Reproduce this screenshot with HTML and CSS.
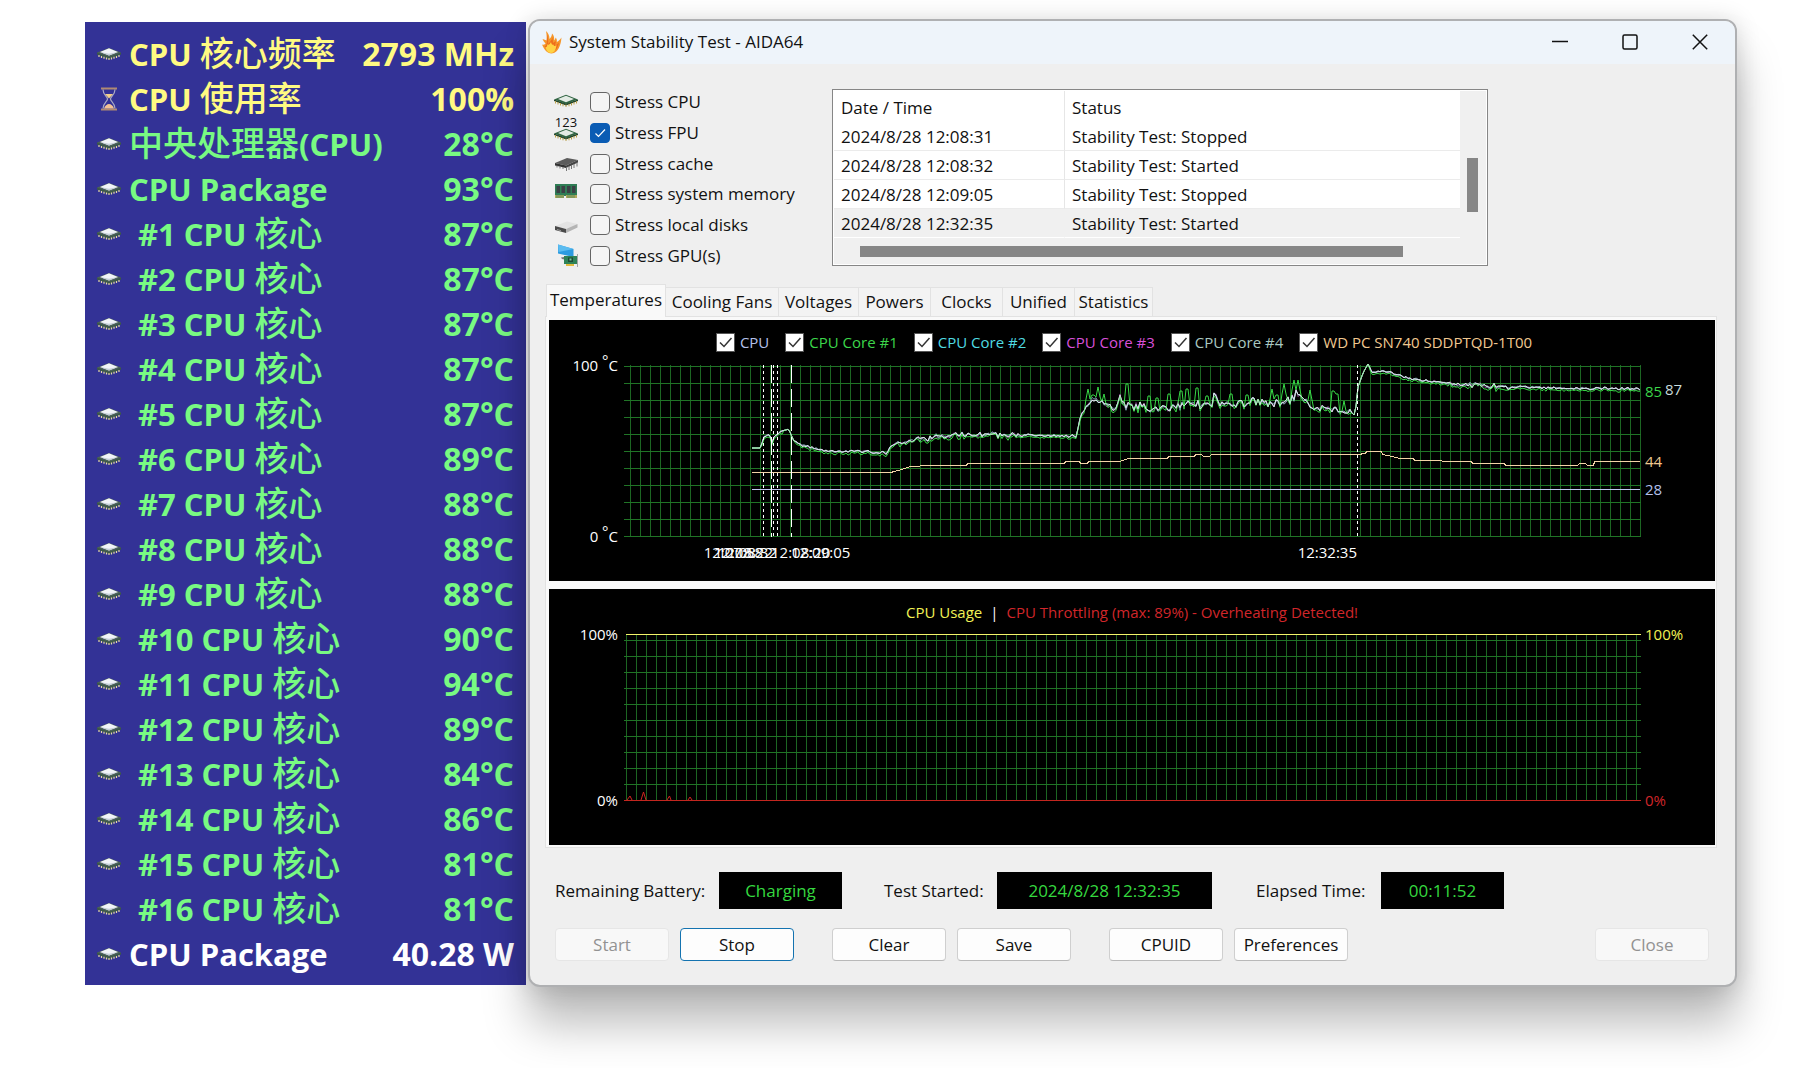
FILE: index.html
```html
<!DOCTYPE html>
<html lang="en">
<head>
<meta charset="utf-8">
<meta name="viewport" content="width=device-width, initial-scale=1">
<title>System Stability Test - AIDA64</title>
<link rel="stylesheet" href="styles.css">
</head>
<body>
<svg class="defs" aria-hidden="true">
  <symbol id="chip" viewBox="0 0 24 13">
    <path d="M0 5.500V7.500L12 12L24 7.500V5.500L12 9.500Z" fill="#3c5a46"/>
    <path d="M2 8v2M4.500 9v2M7 9.800v2M9.500 10.500v2M12 11v2M14.500 10.500v2M17 9.800v2M19.500 9v2M22 8v2" stroke="#e6d9a0" stroke-width="1.200"/>
    <path d="M0 5.500L12 1L24 5.500L12 10Z" fill="#4d6358"/>
    <path d="M3 4.900L12 1.300L21 4.900L12 8.500Z" fill="#f1f4f8"/>
    <path d="M3 4.900L12 8.500L21 4.900L12 6.800Z" fill="#c3ccd6"/>
  </symbol>
  <symbol id="chip-green" viewBox="0 0 24 13">
    <path d="M0 5.500V7L12 11.500L24 7V5.500L12 9.500Z" fill="#23452c"/>
    <path d="M1.500 7v2.500M4 8v2.500M6.500 9v2.500M9 9.800v2.500M12 10.500v2.500M15 9.800v2.500M17.500 9v2.500M20 8v2.500M22.500 7v2.500" stroke="#b9a04a" stroke-width="1"/>
    <path d="M0 5.500L12 .8L24 5.500L12 10Z" fill="#2f6340"/>
    <path d="M4 5L12 1.800L20 5L12 8.300Z" fill="#e3ebe4"/>
  </symbol>
  <symbol id="hourglass" viewBox="0 0 24 24">
    <path d="M4 1.500h16M4 22.500h16" stroke="#b08a72" stroke-width="2"/>
    <path d="M6 2.500C6 8 10.500 9.500 10.500 12S6 16 6 21.500M18 2.500C18 8 13.500 9.500 13.500 12S18 16 18 21.500" fill="none" stroke="#a9a9c4" stroke-width="1.200"/>
    <path d="M8 7h8L12 11.500Z" fill="#f2cf8c"/>
    <path d="M7 21.500C8 18.500 10 17 12 17S16 18.500 17 21.500Z" fill="#f3c294"/>
  </symbol>
</svg>

<div class="desktop">
  <table class="sensors" aria-label="Sensors">
    <colgroup><col class="col-pic"><col><col class="col-value"></colgroup>
    <tbody>
      <tr class="yellow"><td class="pic"><svg class="chip"><use href="#chip"/></svg></td><th scope="row">CPU <span class="cjk">核心频率</span></th><td>2793 MHz</td></tr>
      <tr class="yellow"><td class="pic"><svg class="hourglass"><use href="#hourglass"/></svg></td><th scope="row">CPU <span class="cjk">使用率</span></th><td>100%</td></tr>
      <tr><td class="pic"><svg class="chip"><use href="#chip"/></svg></td><th scope="row"><span class="cjk">中央处理器</span>(CPU)</th><td>28°C</td></tr>
      <tr><td class="pic"><svg class="chip"><use href="#chip"/></svg></td><th scope="row">CPU Package</th><td>93°C</td></tr>
      <tr class="core"><td class="pic"><svg class="chip"><use href="#chip"/></svg></td><th scope="row">#1 CPU <span class="cjk">核心</span></th><td>87°C</td></tr>
      <tr class="core"><td class="pic"><svg class="chip"><use href="#chip"/></svg></td><th scope="row">#2 CPU <span class="cjk">核心</span></th><td>87°C</td></tr>
      <tr class="core"><td class="pic"><svg class="chip"><use href="#chip"/></svg></td><th scope="row">#3 CPU <span class="cjk">核心</span></th><td>87°C</td></tr>
      <tr class="core"><td class="pic"><svg class="chip"><use href="#chip"/></svg></td><th scope="row">#4 CPU <span class="cjk">核心</span></th><td>87°C</td></tr>
      <tr class="core"><td class="pic"><svg class="chip"><use href="#chip"/></svg></td><th scope="row">#5 CPU <span class="cjk">核心</span></th><td>87°C</td></tr>
      <tr class="core"><td class="pic"><svg class="chip"><use href="#chip"/></svg></td><th scope="row">#6 CPU <span class="cjk">核心</span></th><td>89°C</td></tr>
      <tr class="core"><td class="pic"><svg class="chip"><use href="#chip"/></svg></td><th scope="row">#7 CPU <span class="cjk">核心</span></th><td>88°C</td></tr>
      <tr class="core"><td class="pic"><svg class="chip"><use href="#chip"/></svg></td><th scope="row">#8 CPU <span class="cjk">核心</span></th><td>88°C</td></tr>
      <tr class="core"><td class="pic"><svg class="chip"><use href="#chip"/></svg></td><th scope="row">#9 CPU <span class="cjk">核心</span></th><td>88°C</td></tr>
      <tr class="core"><td class="pic"><svg class="chip"><use href="#chip"/></svg></td><th scope="row">#10 CPU <span class="cjk">核心</span></th><td>90°C</td></tr>
      <tr class="core"><td class="pic"><svg class="chip"><use href="#chip"/></svg></td><th scope="row">#11 CPU <span class="cjk">核心</span></th><td>94°C</td></tr>
      <tr class="core"><td class="pic"><svg class="chip"><use href="#chip"/></svg></td><th scope="row">#12 CPU <span class="cjk">核心</span></th><td>89°C</td></tr>
      <tr class="core"><td class="pic"><svg class="chip"><use href="#chip"/></svg></td><th scope="row">#13 CPU <span class="cjk">核心</span></th><td>84°C</td></tr>
      <tr class="core"><td class="pic"><svg class="chip"><use href="#chip"/></svg></td><th scope="row">#14 CPU <span class="cjk">核心</span></th><td>86°C</td></tr>
      <tr class="core"><td class="pic"><svg class="chip"><use href="#chip"/></svg></td><th scope="row">#15 CPU <span class="cjk">核心</span></th><td>81°C</td></tr>
      <tr class="core"><td class="pic"><svg class="chip"><use href="#chip"/></svg></td><th scope="row">#16 CPU <span class="cjk">核心</span></th><td>81°C</td></tr>
      <tr class="white"><td class="pic"><svg class="chip"><use href="#chip"/></svg></td><th scope="row">CPU Package</th><td>40.28 W</td></tr>
    </tbody>
  </table>

  <main class="window">
    <header class="titlebar">
      <svg class="flame" viewBox="0 0 20 24" aria-hidden="true">
        <path d="M4 1C6.500 3 7.500 6 7.500 9C9 7.500 10 5.500 10 3.500C12 5.500 12.500 8 12 10.500C13 9.500 13.500 8.500 13.700 7.500C15 9 15 10.500 14.800 12C16.500 11 18 10 19.500 7.500C19 11 19 13 17.500 16.500C16 20.500 13 23.500 9.500 23.500C5 23.500 2.500 20 0 14.500C2 15 3 14.500 3.500 13.500C2 12 1 10.500 .5 9C2 9.500 3.500 10 4.500 10.500C5 7.500 4.500 4 4 1Z" fill="#f5962a"/>
        <path d="M5 4C6 8 6.500 11 6 14L8 12C9 11 10 9 10.500 7L11 13L14 11L13 16L17 12.500C16 18 13.500 21.500 9.500 22C6 22 4 19 2.500 16C5 16.500 5 13 5 4Z" fill="#ee6d1c"/>
        <path d="M5 14C6.500 16 8 14 9 12C9.500 14 10 15.500 11.500 14.500C12 17 13.500 16 14.500 15C14 20 12 23 9 23C6 23 4 20 3.500 17C5 17.500 5.500 16 5 14Z" fill="#ffd243"/>
      </svg>
      <h1>System Stability Test - AIDA64</h1>
      <div class="caption">
        <button type="button" aria-label="Minimize"><svg viewBox="0 0 16 16"><path d="M0 7.500h16"/></svg></button>
        <button type="button" aria-label="Maximize"><svg viewBox="0 0 16 16"><rect x="1" y="1" width="14" height="14" rx="1.500"/></svg></button>
        <button type="button" aria-label="Close window"><svg viewBox="0 0 16 16"><path d="M.8 .8L15.200 15.200M15.200 .8L.8 15.200"/></svg></button>
      </div>
    </header>

    <section class="setup">
      <div class="stress">
        <label><svg viewBox="0 0 24 20"><use href="#chip-green" y="2" width="24" height="13"/></svg><input type="checkbox">Stress CPU</label>
        <label><svg viewBox="0 0 24 20"><text x="12" y="4" text-anchor="middle">123</text><use href="#chip-green" y="5" width="24" height="13"/></svg><input type="checkbox" checked>Stress FPU</label>
        <label><svg viewBox="0 0 24 20"><path d="M1 9L13 4L24 6L12 11.500Z" fill="#5c5c5c"/><path d="M1 9L12 11.500V14L1 11.500Z" fill="#333"/><path d="M12 11.500L24 6V8.500L12 14Z" fill="#444"/><path d="M12.500 13v4M15 12v4M17.500 11v4M20 10v4M23 8.500v4M3 11.500v2M6 12.500v2M9 13v2" stroke="#777" stroke-width="1"/></svg><input type="checkbox">Stress cache</label>
        <label><svg viewBox="0 0 24 20"><path d="M1 0H23V12H1Z" fill="#2f7d55"/><path d="M2.500 2H6V9H2.500ZM7.500 2H11V9H7.500ZM13 2H16.500V9H13ZM18 2H21.500V9H18Z" fill="#3b4045"/><path d="M1 11H10V14H1ZM12 11H23V14H12Z" fill="#b3a95c"/><path d="M3 11v3M5 11v3M7 11v3M9 11v3M14 11v3M16 11v3M18 11v3M20 11v3" stroke="#2f7d55" stroke-width=".7"/></svg><input type="checkbox">Stress system memory</label>
        <label><svg viewBox="0 0 24 20"><path d="M1 11L13 6.500L23.500 9L12 14Z" fill="#e3e3e3"/><path d="M1 11L12 14V18L1 15Z" fill="#4a4a4a"/><path d="M12 14L23.500 9V12.500L12 18Z" fill="#b4b4b4"/><path d="M3 14.500l4 1.200" stroke="#9a9a9a"/></svg><input type="checkbox">Stress local disks</label>
        <label><svg viewBox="0 0 24 20"><path d="M4 -1.500L19.500 3V11L4 7.500Z" fill="#2c9be0"/><path d="M4 -1.500L19.500 3L4.500 6Z" fill="#5bbcf0"/><path d="M7 11.500L13 10.500V14L8 13Z" fill="#777"/><path d="M10 10H23V18H10Z" fill="#2e8257"/><path d="M14 11.500H19V16H14Z" fill="#1d4a35"/><path d="M15.500 12.500h2v2h-2z" fill="#78c79d"/><path d="M12 18h8v2h-8z" fill="#e0b93c"/><path d="M23.500 8v13" stroke="#a5a5a5"/></svg><input type="checkbox">Stress GPU(s)</label>
      </div>

      <div class="log">
        <table>
          <thead><tr><th scope="col">Date / Time</th><th scope="col">Status</th></tr></thead>
          <tbody>
            <tr><td>2024/8/28 12:08:31</td><td>Stability Test: Stopped</td></tr>
            <tr><td>2024/8/28 12:08:32</td><td>Stability Test: Started</td></tr>
            <tr><td>2024/8/28 12:09:05</td><td>Stability Test: Stopped</td></tr>
            <tr class="selected"><td>2024/8/28 12:32:35</td><td>Stability Test: Started</td></tr>
          </tbody>
        </table>
        <div class="vscroll"><div class="thumb"></div></div>
        <div class="hscroll"><div class="thumb"></div></div>
      </div>
    </section>

    <div class="tabs" role="tablist">
      <button type="button" role="tab" aria-selected="true" class="wide">Temperatures</button>
      <button type="button" role="tab" class="fans">Cooling Fans</button>
      <button type="button" role="tab" class="volts">Voltages</button>
      <button type="button" role="tab">Powers</button>
      <button type="button" role="tab">Clocks</button>
      <button type="button" role="tab">Unified</button>
      <button type="button" role="tab" class="stats">Statistics</button>
    </div>

    <section class="charts">
      <figure class="chart temps">
        <div class="legend">
          <label class="c-cpu"><input type="checkbox" checked>CPU</label>
          <label class="c-core1"><input type="checkbox" checked>CPU Core #1</label>
          <label class="c-core2"><input type="checkbox" checked>CPU Core #2</label>
          <label class="c-core3"><input type="checkbox" checked>CPU Core #3</label>
          <label class="c-core4"><input type="checkbox" checked>CPU Core #4</label>
          <label class="c-disk"><input type="checkbox" checked>WD PC SN740 SDDPTQD-1T00</label>
        </div>
        <div class="graph">
          <div class="axis"><span>100 <span class="deg">°</span>C</span><span>0 <span class="deg">°</span>C</span></div>
          <div class="plot">
            <svg id="temps" viewBox="0 0 1017 172" preserveAspectRatio="none" aria-label="Temperature history"></svg>
            <div class="times" id="times"></div>
          </div>
          <div class="readouts">
            <span class="c-core1" style="top:15%">85</span>
            <span class="c-core4 second" style="top:14%">87</span>
            <span class="c-disk" style="top:56%">44</span>
            <span class="c-cpu" style="top:72%">28</span>
          </div>
        </div>
      </figure>
      <figure class="chart usage">
        <figcaption><span class="c-usage">CPU Usage</span><span class="bar">|</span><span class="c-throttle">CPU Throttling (max: 89%) - Overheating Detected!</span></figcaption>
        <div class="graph">
          <div class="axis"><span>100%</span><span>0%</span></div>
          <div class="plot">
            <svg viewBox="0 0 1017 167" preserveAspectRatio="none" aria-label="Usage history">
              <path d="M2 .5H1017" stroke="#f4f46a"/>
              <path d="M0 166.500H1017" stroke="#c3261f"/>
              <path class="soft" d="M3 166L6 162L8 166M17 166L19.500 158L22 166M43 166L45.500 162L47 166M64 166L66 163L68 166" stroke="#d0261f"/>
            </svg>
          </div>
          <div class="axis right"><span class="c-usage">100%</span><span class="c-throttle">0%</span></div>
        </div>
      </figure>
    </section>

    <section class="status">
      <span class="caption-text">Remaining Battery:</span><output class="battery">Charging</output>
      <span class="caption-text">Test Started:</span><output class="started">2024/8/28 12:32:35</output>
      <span class="caption-text">Elapsed Time:</span><output class="elapsed">00:11:52</output>
    </section>

    <footer class="actions">
      <div><button type="button" disabled>Start</button><button type="button" class="primary">Stop</button></div>
      <div><button type="button">Clear</button><button type="button">Save</button></div>
      <div><button type="button">CPUID</button><button type="button">Preferences</button></div>
      <div class="end"><button type="button" disabled>Close</button></div>
    </footer>
  </main>
</div>
<script src="charts.js"></script>
</body>
</html>
```
FILE: styles.css
```css
* { box-sizing: border-box; }
body {
  margin: 0;
  background: #fff;
  color: #111;
  font: 17px/20px "Open Sans", "Noto Sans", "Noto Sans CJK SC", sans-serif;
}
button, input { font: inherit; color: inherit; margin: 0; }
.defs { position: absolute; width: 0; height: 0; }
.desktop {
  display: flex;
  align-items: flex-start;
  gap: 2px;
  padding: 19px 57px 81px 85px;
}

/* Sensor panel */
.sensors {
  flex: none;
  width: 441px;
  margin-top: 3px;
  table-layout: fixed;
  background: #333296;
  border-collapse: separate;
  border-spacing: 0;
  border-top: 9px solid #333296;
  border-bottom: 9px solid #333296;
  color: #78fa82;
  font-weight: 700;
}
.col-pic { width: 44px; }
.col-value { width: 168px; }
.sensors tr { height: 45px; }
.sensors th, .sensors td { padding: 0; line-height: 44px; white-space: nowrap; }
.sensors th { text-align: left; font-size: 31px; }
.sensors td { text-align: right; font-size: 32px; padding-right: 12px; }
.sensors .pic { padding: 0 0 0 12px; text-align: left; line-height: 0; vertical-align: middle; }
.sensors .core th { padding-left: 9px; }
.sensors .yellow { color: #fffa82; }
.sensors .white { color: #fff; }
.cjk { font: 500 34px/34px "Noto Sans CJK SC", sans-serif; }
.chip { width: 24px; height: 13px; }
.hourglass { width: 24px; height: 24px; }

/* Window frame */
.window {
  flex: 1;
  min-width: 0;
  background: #efefef;
  border: 2px solid #afb0b2;
  border-radius: 12px;
  box-shadow: 0 38px 45px rgba(0, 0, 0, .26), 0 2px 24px rgba(0, 0, 0, .16);
}
.titlebar {
  display: flex;
  align-items: center;
  height: 43px;
  padding: 0 0 2px 12px;
  background: #eef4fa;
  border-radius: 10px 10px 0 0;
}
.flame { width: 20px; height: 24px; margin-right: 7px; }
h1 { margin: 0; font-size: 17px; font-weight: 400; }
.caption { display: flex; margin-left: auto; }
.caption button { width: 70px; height: 41px; padding: 0; border: 0; background: none; line-height: 0; }
.caption svg { width: 16px; height: 16px; fill: none; stroke: #111; stroke-width: 1.500px; }

/* Stress options and event log */
.setup { display: flex; padding: 25px 24px 0; }
.stress {
  display: flex;
  flex: 0 0 278px;
  flex-direction: column;
  justify-content: space-between;
  padding-top: 3px;
}
.stress label { display: flex; align-items: center; height: 20px; white-space: nowrap; }
.stress svg { width: 24px; height: 20px; margin-right: 12px; overflow: visible; }
.stress text { font-size: 13px; fill: #111; }
.stress input {
  appearance: none;
  width: 20px;
  height: 20px;
  margin-right: 5px;
  border: 1px solid #666;
  border-radius: 4px;
  background: #f5f5f5;
}
.stress input:checked {
  border-color: #0a5cb4;
  background: #0a5cb4 url("data:image/svg+xml,%3Csvg xmlns='http://www.w3.org/2000/svg' viewBox='0 0 18 18'%3E%3Cpath d='M4.500 9.500l3 3l6.500-7' fill='none' stroke='white' stroke-width='1.200'/%3E%3C/svg%3E");
}
.log {
  display: grid;
  flex: 0 1 656px;
  grid-template-columns: 1fr 26px;
  padding: 1px;
  border: 1px solid #868686;
  background: #fff;
}
.log table { width: 100%; border-spacing: 0; }
.log th, .log td { padding: 2px 7px 0; text-align: left; font-weight: 400; }
.log th { height: 31px; }
.log td { height: 29px; border-bottom: 1px solid #ebebeb; }
.log th:first-child, .log td:first-child { width: 231px; border-right: 1px solid #e6e6e6; }
.log .selected td { background: #f0f0f0; border-bottom-color: #fff; }
.log .selected td:first-child { border-right-color: #f0f0f0; }
.vscroll { padding: 67px 8px 0 7px; background: #f0f0f0; }
.vscroll .thumb { height: 54px; }
.hscroll { grid-column: 1 / -1; height: 26px; padding: 8px 83px 7px 26px; background: #f0f0f0; }
.hscroll .thumb { height: 11px; }
.thumb { background: #868686; }

/* Tabs */
.tabs { display: flex; align-items: flex-end; margin: 18px 0 0 16px; }
.tabs button {
  width: 72px;
  height: 29px;
  padding: 0;
  border: 1px solid #e2e2e2;
  border-width: 1px 1px 0 0;
  background: #f3f3f3;
  white-space: nowrap;
}
.tabs .wide { width: 120px; }
.tabs .fans { width: 113px; }
.tabs .volts { width: 80px; }
.tabs .stats { width: 78px; }
.tabs [aria-selected="true"] {
  position: relative;
  height: 33px;
  margin-bottom: -1px;
  padding-bottom: 2px;
  border-left-width: 1px;
  background: #f9f9f9;
}

/* Charts */
.charts {
  display: grid;
  gap: 8px;
  margin: 0 18px 0 15px;
  padding: 3px 1px 2px 3px;
  border: 1px solid #e2e2e2;
  background: #f9f9f9;
}
.chart { margin: 0; background: #000; color: #fff; font-size: 15px; }
.legend { display: flex; justify-content: center; gap: 16px; padding: 12px 16px 13px 0; }
.legend label { display: flex; align-items: center; gap: 5px; height: 20px; white-space: nowrap; }
.legend input {
  appearance: none;
  width: 19px;
  height: 19px;
  border: 1px solid #555;
  background: #fff url("data:image/svg+xml,%3Csvg xmlns='http://www.w3.org/2000/svg' viewBox='0 0 17 17'%3E%3Cpath d='M3 8.500l4 4l7.500-8.500' fill='none' stroke='%23333' stroke-width='1.500'/%3E%3C/svg%3E");
}
.graph { display: flex; }
.axis { display: flex; flex: none; flex-direction: column; justify-content: space-between; width: 75px; margin: -10px 0 -9px; padding-right: 6px; text-align: right; }
.axis.right { width: 74px; padding: 0 0 0 4px; text-align: left; }
.deg { vertical-align: 5px; line-height: 0; }
.plot {
  position: relative;
  flex: 1;
  min-width: 0;
  background-image:
    linear-gradient(#207426 1px, transparent 1px),
    linear-gradient(90deg, #1c6622 1px, transparent 1px);
}
.plot svg { display: block; width: 100%; height: 100%; overflow: visible; fill: none; stroke-width: 1px; shape-rendering: crispEdges; }
.plot .soft { shape-rendering: auto; }
.temps .graph { height: 172px; margin-bottom: 44px; }
.temps .plot { background-size: 100% 17px, 10px 100%; background-position: 0 1px, 6px 0; }
.times span { position: absolute; top: 177px; white-space: nowrap; }
.times .before { transform: translateX(-100%); }
.readouts { position: relative; flex: none; width: 74px; }
.readouts span { position: absolute; left: 4px; margin-top: -10px; }
.readouts .second { left: 24px; }
.usage figcaption { display: flex; justify-content: center; gap: 8px; padding: 13px 0 12px; }
.usage .graph { height: 167px; margin-bottom: 44px; }
.usage .plot { background-size: 100% 16px, 10px 100%; background-position: 0 6px, 2px 0; }
.c-cpu { color: #b4c0ea; }
.c-core1 { color: #3cd64a; }
.c-core2 { color: #4fdbe2; }
.c-core3 { color: #d850d8; }
.c-core4 { color: #c9dcdc; }
.c-disk { color: #f0c890; }
.c-usage { color: #f2f255; }
.c-throttle { color: #d0262a; }
.legend .c-core4 { color: #a9c8c0; }

/* Status line and buttons */
.status { display: flex; align-items: center; margin: 24px 25px 0; white-space: nowrap; }
.status output { height: 37px; background: #000; color: #35d83f; line-height: 38px; text-align: center; }
.battery { width: 123px; margin-right: 42px; }
.started { width: 215px; margin-right: 44px; }
.elapsed { width: 123px; }
.caption-text:nth-of-type(1) { width: 164px; }
.caption-text:nth-of-type(2) { width: 113px; }
.caption-text:nth-of-type(3) { width: 125px; }
.actions { display: flex; gap: 38px; padding: 19px 26px 24px 25px; }
.actions div { display: flex; gap: 11px; }
.actions .end { margin-left: auto; }
.actions button {
  width: 114px;
  height: 33px;
  padding: 0;
  border: 1px solid #cfcfcf;
  border-bottom-color: #b9b9b9;
  border-radius: 4px;
  background: #fdfdfd;
}
.actions .primary { border-color: #1473b0; }
.actions button:disabled { border-color: #e6e6e6; background: #f8f8f8; color: #929292; }
```
FILE: charts.js
```js
// Temperature history: anchor points [x, y, jitter] in a 1017 x 172 plot area.
const base = [
  [128, 83, 0], [137, 83, 0], [139, 72, 1], [146, 70, 1], [148, 78, 1], [150, 71, 1], [158, 66, 1], [165, 64, 0],
  [167, 70, 0], [170, 76, 0], [179, 81, 1], [193, 84, 1], [205, 87, 1], [231, 86, 1], [263, 88, 1], [266, 81, 1],
  [275, 78, 2], [292, 74, 2], [311, 72, 2], [331, 70, 2], [400, 70, 2], [452, 71, 1], [457, 50, 1], [463, 37, 3],
  [476, 37, 4], [485, 42, 3], [493, 43, 2], [495, 31, 1], [500, 40, 4], [520, 41, 4], [529, 48, 3], [540, 42, 4], [560, 40, 4],
  [588, 39, 4], [591, 23, 1], [595, 39, 4], [620, 38, 3], [660, 38, 4], [674, 28, 5], [688, 42, 2],
  [709, 44, 3], [727, 47, 2], [731, 51, 0], [734, 22, 0], [739, 8, 0], [744, -1, 0], [747, 7, 1], [766, 7, 1],
  [780, 12, 1], [802, 16, 1], [823, 18, 1], [852, 20, 2], [884, 22, 2], [940, 23, 1], [1016, 24, 1]
];
const spikes = [
  [464, 24], [469, 25], [474, 22], [480, 29], [503, 14], [525, 26], [533, 28], [545, 24], [557, 21], [563, 19],
  [573, 18], [583, 26], [607, 24], [623, 25], [648, 24], [653, 25], [660, 19], [670, 15], [674, 15], [686, 25],
  [709, 21], [713, 24], [720, 36]
];
const disk = "128,107 267,107 270,106 278,104 286,101 307,100 342,100 344,98 440,98 442,96 455,96 457,98 463,98 465,96 495,96 505,93 543,93 545,91 570,91 572,89 577,89 580,91 585,91 588,89 734,89 741,88 743,86 757,86 759,89 768,91 776,93 789,93 791,95 817,95 819,96 847,96 849,98 880,98 882,100 953,100 956,98 961,98 964,100 969,100 971,96 1016,96";
const events = [
  [139, "12:07:58", "before"], [147, "12:08:20", "after"], [149, "12:08:22", "before"],
  [153, "12:08:32", "before"], [167, "12:09:05", "after"], [733, "12:32:35", "before"]
];

function randomizer(seed) {
  return () => {
    seed = (seed * 16807) % 2147483647;
    return seed / 2147483647 * 2 - 1;
  };
}
function level(x) {
  let i = 1;
  while (i < base.length - 1 && base[i][0] < x) i++;
  const [x0, y0] = base[i - 1], [x1, y1, jitter] = base[i];
  return [y0 + (y1 - y0) * (x - x0) / (x1 - x0), jitter];
}
function trace(own, offset, withSpikes) {
  const shared = randomizer(77), extra = randomizer(own), points = [];
  for (let x = 128; x <= 1016; x += 2) {
    const [y, jitter] = level(x);
    let value = y + shared() * jitter + extra() * Math.min(jitter, 2) * .8 + (jitter ? offset : 0);
    if (withSpikes) {
      for (const [sx, sy] of spikes) {
        const d = Math.abs(sx - x);
        if (d < 3) value = Math.min(value, sy + d * 5);
      }
    }
    points.push(x + "," + value.toFixed(1));
  }
  return points.join(" ");
}
const svg = document.getElementById("temps");
function add(tag, attributes) {
  const node = document.createElementNS("http://www.w3.org/2000/svg", tag);
  for (const key in attributes) node.setAttribute(key, attributes[key]);
  svg.append(node);
}
add("polyline", { points: "128,124.5 1016,124.5", stroke: "#c3c6f2" });
add("polyline", { points: disk, stroke: "#f3d3a6", transform: "translate(0 .5)" });
add("polyline", { points: trace(53, 0, false), stroke: "#dcecea", class: "soft" });
add("polyline", { points: trace(37, 0, false), stroke: "#d860dc", "stroke-opacity": ".5", class: "soft" });
add("polyline", { points: trace(23, 0, false), stroke: "#9fe8e6", "stroke-opacity": ".6", class: "soft" });
add("polyline", { points: trace(11, 2, true), stroke: "#38d846", class: "soft" });
add("polyline", { points: trace(53, 0, false), stroke: "#dcecea", "stroke-opacity": ".7", class: "soft" });

const times = document.getElementById("times");
for (const [x, text, side] of events) {
  add("path", { d: `M${x + .5} 0V172`, stroke: "#fff", "stroke-dasharray": side === "after" ? "18 6" : "3 3" });
  const label = document.createElement("span");
  label.className = side;
  label.textContent = text;
  label.style.left = (x / 1017 * 100) + "%";
  times.append(label);
}
```
